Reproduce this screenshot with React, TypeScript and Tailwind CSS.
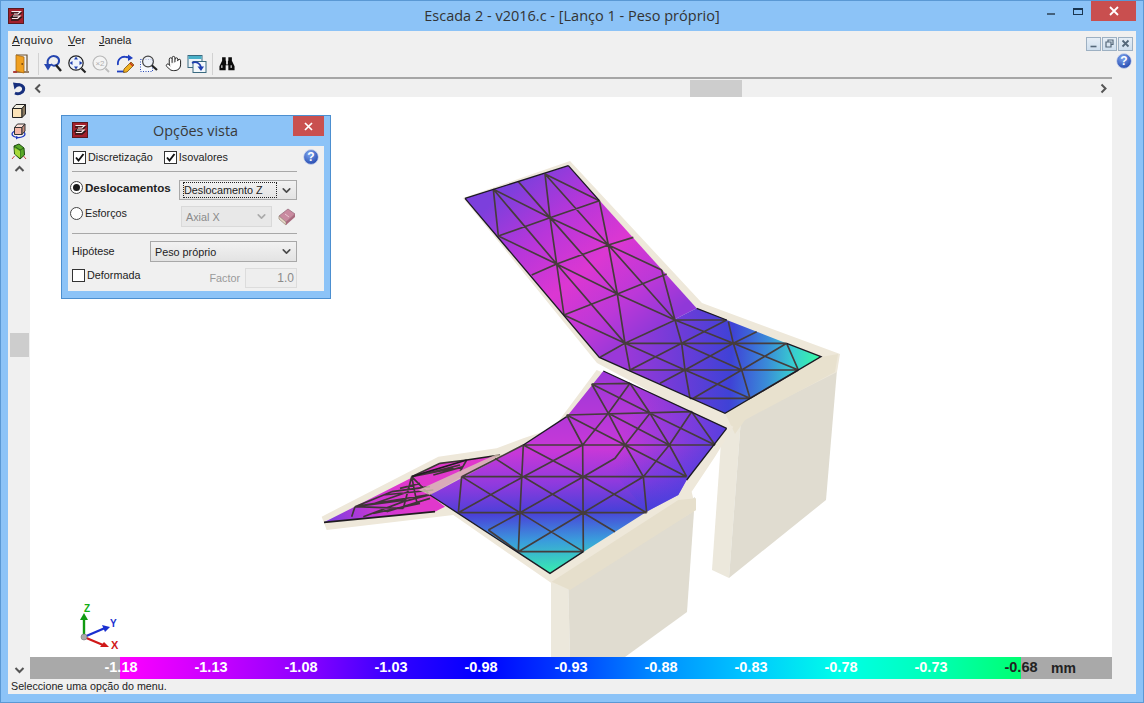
import { Hand, ChevronDown } from "lucide-react";

const sans = "font-['Liberation_Sans',Arial,sans-serif]";

function Logo() {
  return (
    <svg width="16" height="16" viewBox="0 0 16 16">
      <rect x="0" y="0" width="16" height="16" fill="#a3202c" />
      <rect x="0.5" y="0.5" width="15" height="15" fill="none" stroke="#5b1a20" />
      <path d="M3 5 H13 L10 7.5 H5 L3 9.5 H13 L10 12 H3" fill="none" stroke="#2a1a1a" strokeWidth="1.3" />
      <path d="M3.5 3.5 H12.5 L10 6 H6 M5 8 H12 L9.5 10.5 H4" fill="none" stroke="#f5eaea" strokeWidth="1.2" />
    </svg>
  );
}

function HelpIcon() {
  return (
    <svg width="16" height="16" viewBox="0 0 16 16">
      <defs>
        <radialGradient id="hg" cx="0.4" cy="0.3" r="0.8">
          <stop offset="0" stopColor="#7ea6ee" />
          <stop offset="1" stopColor="#1c3fa8" />
        </radialGradient>
      </defs>
      <circle cx="8" cy="8" r="7.4" fill="url(#hg)" stroke="#d5def0" strokeWidth="0.8" />
      <text x="8" y="12" textAnchor="middle" fontSize="12" fontWeight="700" fill="#fff" fontFamily="Liberation Sans">?</text>
    </svg>
  );
}

function Door() {
  return (
    <svg width="20" height="22" viewBox="0 0 20 22">
      <path d="M3 19 H18" stroke="#7a5a3a" strokeWidth="1.5" />
      <path d="M5 2 H16 V18" fill="none" stroke="#6b5030" strokeWidth="1.2" />
      <path d="M5 2 L13 4 V20 L5 18 Z" fill="#f0a020" stroke="#a86a10" strokeWidth="0.8" />
      <rect x="10.5" y="10" width="1.4" height="2" fill="#7a4a10" />
      <path d="M2 19 L6 19" stroke="#b03030" strokeWidth="1.6" />
    </svg>
  );
}

function ZoomReset() {
  return (
    <svg width="20" height="20" viewBox="0 0 20 20">
      <path d="M5 11 C3 4 9 1 13 2.5 C17 4 17 9 13.5 11 C11 12.2 9 11.5 8 10" fill="none" stroke="#2646b0" strokeWidth="2" />
      <path d="M1 10 H9 L5 16.5 Z" fill="#2646b0" />
      <path d="M13 11 L18 17" stroke="#222" strokeWidth="2.4" />
    </svg>
  );
}

function ZoomAll() {
  return (
    <svg width="20" height="20" viewBox="0 0 20 20">
      <circle cx="9" cy="9" r="7.2" fill="#eef3fb" stroke="#222" strokeWidth="1.2" />
      <path d="M9 2.5 L11 5.5 H7 Z M9 15.5 L11 12.5 H7 Z M2.5 9 L5.5 7 V11 Z M15.5 9 L12.5 7 V11 Z" fill="#1f3fb0" />
      <path d="M14.5 14.5 L18.5 18.5" stroke="#222" strokeWidth="2.2" />
    </svg>
  );
}

function ZoomTwo() {
  return (
    <svg width="20" height="20" viewBox="0 0 20 20">
      <circle cx="9" cy="9" r="7" fill="#f4f4f4" stroke="#b8b8b8" strokeWidth="1.2" />
      <text x="9" y="12" textAnchor="middle" fontSize="8" fill="#b0b0b0" fontFamily="Liberation Sans">×2</text>
      <path d="M14.5 14.5 L18 18" stroke="#bdbdbd" strokeWidth="1.8" />
    </svg>
  );
}

function Redraw() {
  return (
    <svg width="20" height="20" viewBox="0 0 20 20">
      <path d="M3 11 C2 5 7 2 11 3 L15 3.5" fill="none" stroke="#1f3fc0" strokeWidth="1.8" />
      <path d="M13 0.5 L18 4 L13 7 Z" fill="#1f3fc0" />
      <path d="M2 17.5 H10" stroke="#1f3fc0" strokeWidth="1.8" />
      <path d="M9 15 L16 8 L19 11 L12 18 L8.5 18.5 Z" fill="#f0b020" stroke="#7a5010" strokeWidth="0.8" />
      <path d="M15 9 L18 12" stroke="#c03020" strokeWidth="1.4" />
    </svg>
  );
}

function ZoomWin() {
  return (
    <svg width="20" height="20" viewBox="0 0 20 20">
      <rect x="1.5" y="5.5" width="12" height="12" fill="#f6f8fc" stroke="#2a4ab8" strokeDasharray="1 1.5" />
      <circle cx="9" cy="7.5" r="5.4" fill="#e9eef6" fillOpacity="0.7" stroke="#444" strokeWidth="1.2" />
      <path d="M13 11.5 L18 16" stroke="#222" strokeWidth="2.2" />
    </svg>
  );
}

function WinArrow() {
  return (
    <svg width="20" height="20" viewBox="0 0 20 20">
      <rect x="1" y="1.5" width="14" height="12" fill="#eaf3f8" stroke="#3a6a80" />
      <rect x="1.5" y="2" width="13" height="3" fill="#48b0c8" />
      <rect x="6" y="7.5" width="13" height="11" fill="#f2f8fb" stroke="#3a6a80" />
      <path d="M5 9 C9 7 13 9 14 13" fill="none" stroke="#1f3fb0" strokeWidth="1.8" />
      <path d="M10.5 12.5 H17 L14 17 Z" fill="#1f3fb0" />
    </svg>
  );
}

function Binoculars() {
  return (
    <svg width="16" height="15" viewBox="0 0 18 16">
      <path d="M3.5 1 H7.5 V5 H8 V9 H10 V5 H10.5 V1 H14.5 V5 L17.5 11 V15.5 H10.5 V10 H7.5 V15.5 H0.5 V11 L3.5 5 Z" fill="#0c0c0c" />
      <rect x="2.5" y="10" width="1.4" height="3" fill="#cfcfcf" />
      <rect x="13" y="10" width="1.4" height="3" fill="#cfcfcf" />
    </svg>
  );
}

function Undo() {
  return (
    <svg width="14" height="14" viewBox="0 0 14 14">
      <path d="M4.5 3.5 C8 1.5 12.5 4 11.5 8 C10.5 11.5 6 12.5 3 11" fill="none" stroke="#17307e" strokeWidth="3" />
      <path d="M1 0.5 L8 1.5 L2.5 7.5 Z" fill="#17307e" />
    </svg>
  );
}

function BoxA() {
  return (
    <svg width="16" height="16" viewBox="0 0 16 16">
      <path d="M1.5 5.5 H11 V14.5 H1.5 Z" fill="#fbe3b8" stroke="#222" />
      <path d="M1.5 5.5 L5 1.5 H14.5 L11 5.5 Z" fill="#f3efe0" stroke="#222" />
      <path d="M11 5.5 L14.5 1.5 V11 L11 14.5 Z" fill="#8a7a60" stroke="#222" />
    </svg>
  );
}

function BoxB() {
  return (
    <svg width="16" height="18" viewBox="0 0 16 18">
      <ellipse cx="7.5" cy="12" rx="6.5" ry="3.6" fill="none" stroke="#2038c0" strokeWidth="1.3" />
      <path d="M3.5 5.5 H11 V12.5 H3.5 Z" fill="#f4b8a8" stroke="#333" />
      <path d="M3.5 5.5 L6.5 2 H14 L11 5.5 Z" fill="#fbe0d8" stroke="#333" />
      <path d="M11 5.5 L14 2 V9 L11 12.5 Z" fill="#c89080" stroke="#333" />
      <path d="M5 14 L8 15.5 L5 17.5 Z" fill="#2038c0" />
    </svg>
  );
}

function BoxC() {
  return (
    <svg width="16" height="18" viewBox="0 0 16 18">
      <path d="M3 3 L8 1 L13 5 L13.5 12 L9 16 L3.5 11 Z" fill="#58a828" stroke="#1e4a10" />
      <path d="M3 3 L9 7 L9 16 M9 7 L13 5" fill="none" stroke="#205010" strokeWidth="0.8" />
      <path d="M3.5 5 L9 8 V15 L4 11 Z" fill="#a8d838" />
      <path d="M1 16 L3.5 13 M15 16 L12.5 13" stroke="#c84040" />
    </svg>
  );
}

function Chev({ dir }: { dir: "up" | "down" | "left" | "right" }) {
  const d = {
    up: "M1.5 7 L5.5 3 L9.5 7",
    down: "M1.5 3 L5.5 7 L9.5 3",
    left: "M7 1.5 L3 5.5 L7 9.5",
    right: "M3.5 1.5 L7.5 5.5 L3.5 9.5",
  }[dir];
  return (
    <svg width="11" height="11" viewBox="0 0 11 11">
      <path d={d} fill="none" stroke="#555" strokeWidth="2" />
    </svg>
  );
}

function Book() {
  return (
    <svg width="18" height="18" viewBox="0 0 18 18">
      <path d="M1 8 L10 1 L17 6 L8 14 Z" fill="#c98aa0" stroke="#9a7080" strokeWidth="0.8" />
      <path d="M1 8 L8 14 V17 L1 11 Z" fill="#e8d8c8" stroke="#a09080" strokeWidth="0.8" />
      <path d="M8 14 L17 6 V9 L8 17 Z" fill="#a8687c" />
      <path d="M7 6 L11 9" stroke="#e8c8d0" />
    </svg>
  );
}

function Check({ on }: { on: boolean }) {
  return (
    <span className="w-[13px] h-[13px] bg-white border border-[#333] flex items-center justify-center shrink-0">
      {on && (
        <svg width="11" height="11" viewBox="0 0 11 11">
          <path d="M2 5.5 L4.5 8.5 L9.5 2" fill="none" stroke="#111" strokeWidth="1.9" />
        </svg>
      )}
    </span>
  );
}

function Radio({ on }: { on: boolean }) {
  return (
    <span className="w-[13px] h-[13px] rounded-full bg-white border border-[#444] flex items-center justify-center shrink-0">
      {on && <span className="w-[7px] h-[7px] rounded-full bg-[#1a1a1a]" />}
    </span>
  );
}

function Select({
  text,
  w,
  h,
  disabled,
  focus,
}: {
  text: string;
  w: string;
  h: string;
  disabled?: boolean;
  focus?: boolean;
}) {
  return (
    <div
      className={`${w} ${h} flex items-center justify-between pl-[3px] pr-[3px] border shrink-0 ${
        disabled ? "bg-[#e8e8e8] border-[#d9d9d9] text-[#8a8a8a]" : "bg-[linear-gradient(#f2f2f2,#e3e3e3)] border-[#a8a8a8] text-[#222]"
      }`}
    >
      <span className={`${focus ? "border border-dotted border-[#222]" : "border border-transparent"} pr-[13px] leading-[14px] -mr-[6px]`}>{text}</span>
      <ChevronDown size={13} strokeWidth={3} className={`ml-auto ${disabled ? "text-[#aaa]" : "text-[#4a4a4a]"}`} />
    </div>
  );
}

function Dialog() {
  return (
    <div className={`absolute left-[31px] top-[18px] w-[270px] h-[184px] bg-[#8cc3f7] border border-[#4c8fd0] flex flex-col ${sans} text-[10.8px] text-[#222]`}>
      <div className="h-[30px] flex items-start pl-[10px] pr-[6px] shrink-0">
        <div className="pt-[6px]">
          <Logo />
        </div>
        <div className="flex-1 text-center pt-[5px] text-[14.4px] leading-[20px] text-[#3a3a3a] font-['Open_Sans',sans-serif] pl-[10px]">Opções vista</div>
        <div className="w-[31px] h-[20px] bg-[#c9504f] flex items-center justify-center">
          <svg width="9" height="9" viewBox="0 0 9 9">
            <path d="M1 1 L8 8 M8 1 L1 8" stroke="#fff" strokeWidth="1.7" />
          </svg>
        </div>
      </div>
      <div className="mx-[6px] h-[145px] bg-[#f0f0f0] flex flex-col pl-[4px] pr-[1px]">
        <div className="h-[26px] flex items-center relative border-b border-[#a8a8a8] mr-[26px] shrink-0 pb-[2px]">
          <div className="flex items-center gap-[2px] pl-[1px]">
            <Check on />
            <span>Discretização</span>
          </div>
          <div className="flex items-center gap-[2px] ml-[11px]">
            <Check on />
            <span>Isovalores</span>
          </div>
          <div className="absolute left-[231px] top-[3px]">
            <HelpIcon />
          </div>
        </div>
        <div className="h-[62px] border-b border-[#a8a8a8] mr-[26px] shrink-0 flex flex-col">
          <div className="flex items-center pt-[8px] -ml-[2px]">
            <div className="flex items-center -mt-[5px]">
              <Radio on />
              <span className="ml-[2px] font-bold text-[11.6px] w-[94px]">Deslocamentos</span>
            </div>
            <Select text="Deslocamento Z" w="w-[118px]" h="h-[20px]" focus />
          </div>
          <div className="flex items-center mt-[3px] -ml-[2px]">
            <div className="flex items-center -mt-[4px]">
              <Radio on={false} />
              <span className="ml-[2px] w-[96px]">Esforços</span>
            </div>
            <div className="mt-[3px] flex items-center shrink-0">
              <Select text="Axial X" w="w-[91px]" h="h-[21px]" disabled />
              <div className="ml-[6px]">
                <Book />
              </div>
            </div>
          </div>
        </div>
        <div className="flex items-center h-[35px] mr-[24px] shrink-0">
          <span className="w-[78px]">Hipótese</span>
          <Select text="Peso próprio" w="w-[147px]" h="h-[21px]" />
        </div>
        <div className="flex items-start h-[21px] mr-[26px] shrink-0">
          <Check on={false} />
          <span className="ml-[2px] leading-[13px]">Deformada</span>
          <span className="ml-auto mr-[5px] mt-[2px] leading-[14px] text-[#9a9a9a]">Factor</span>
          <div className="w-[52px] h-[20px] -mt-[1px] border border-[#dcdcdc] bg-[#eeeeee] text-[#8a8a8a] text-right pr-[2px] text-[12px] leading-[19px]">1.0</div>
        </div>
      </div>
    </div>
  );
}

const upperMesh =
  "M160 118 L175 258 M160 118 L330 203 M160 118 L350 342 M235 95 L330 203 M315 72 L330 203 M315 72 L478 152 M315 72 L505 285 M330 203 L478 152 M175 258 L330 203 M175 258 L350 342 M330 203 L350 342 M330 203 L505 285 M330 203 L532 432 M478 152 L505 285 M350 342 L505 285 M275 375 L350 342 M505 285 L580 262 M505 285 L532 432 M505 285 L665 360 M505 285 L705 510 M350 342 L372 495 M350 342 L532 432 M350 342 L555 580 M372 495 L532 432 M532 432 L680 372 M532 432 L555 580 M532 432 L705 510 M665 360 L705 510 M372 495 L555 580 M555 580 L705 510 M480 622 L555 580 M555 580 L570 660 M555 580 L735 660 M555 580 L1040 580 M705 510 L860 510 M705 510 L725 580 M705 510 L880 580 M725 580 L570 660 M725 580 L735 660 M725 580 L905 660 M725 580 L860 510 M880 580 L865 515 M880 580 L735 660 M880 580 L905 660 M880 580 L950 545 M880 580 L1075 660 M1040 580 L905 660 M1040 580 L1075 660 M570 660 L1075 660 M735 660 L750 745 M735 660 L660 700 M735 660 L930 745 M905 660 L930 745 M905 660 L760 745 M750 745 L930 745 M1075 660 L930 745";

const middleMesh =
  "M455 350 L1130 350 M445 458 L1010 458 M625 575 L820 575 M640 255 L1215 255 M770 165 L1145 155 M640 255 L630 458 L625 575 M818 255 L820 575 M1000 350 L1010 458 M455 350 L445 458 M640 255 L820 350 L1010 458 M640 350 L820 458 L915 515 M640 350 L445 458 M820 350 L630 458 M820 458 L625 575 M630 458 L820 575 M625 575 L535 510 M630 458 L535 510 M1000 350 L820 458 M818 255 L640 350 M820 350 L915 295 L945 255 M770 165 L818 255 M770 165 L945 255 M845 72 L895 160 M845 72 L1020 160 M895 160 L945 255 M895 160 L818 255 M960 70 L895 160 M960 70 L1020 160 M1020 160 L1078 255 M1020 160 L945 255 M895 160 L1078 255 M1145 155 L1078 255 M1020 160 L1215 255 M1145 155 L1215 255 M945 255 L1000 350 M945 255 L1130 350 M1078 255 L1130 350 M1078 255 L1000 350 M555 295 L640 350 M640 255 L455 350 M845 72 L960 70 M455 350 L630 458";

const leftMesh =
  "M105 185 L95 215 M105 185 L250 190 M105 185 L260 165 M105 185 L215 140 M215 140 L330 125 M275 95 L250 190 M275 95 L325 145 M360 55 L440 45 M360 55 L275 95 M130 215 L250 170 L345 145 M200 200 L330 160 M440 45 L420 80 M215 140 L290 130 M160 205 L300 175 M240 130 L300 115 M105 185 L320 150 M150 180 L265 140 M275 95 L400 70 M300 90 L420 60 M275 95 L290 170 M340 90 L430 65 M190 150 L340 135";

function Scene() {
  return (
    <svg className="absolute inset-0" width="1082" height="560" viewBox="30 97 1082 560">
      <defs>
        <linearGradient id="fu" gradientUnits="userSpaceOnUse" x1="230" y1="95" x2="620" y2="560">
          <stop offset="0" stopColor="#7c3fdc" />
          <stop offset="0.28" stopColor="#b736da" />
          <stop offset="0.55" stopColor="#dc37d2" />
          <stop offset="0.8" stopColor="#bb38d8" />
          <stop offset="1" stopColor="#9038d8" />
        </linearGradient>
        <linearGradient id="lu" gradientUnits="userSpaceOnUse" x1="560" y1="620" x2="1130" y2="650">
          <stop offset="0" stopColor="#9a38d8" />
          <stop offset="0.3" stopColor="#6a3cd8" />
          <stop offset="0.55" stopColor="#3f42d6" />
          <stop offset="0.74" stopColor="#3a8cd8" />
          <stop offset="0.88" stopColor="#38cfd0" />
          <stop offset="1" stopColor="#38f5a8" />
        </linearGradient>
        <linearGradient id="md" gradientUnits="userSpaceOnUse" x1="700" y1="30" x2="720" y2="640">
          <stop offset="0" stopColor="#9a38d8" />
          <stop offset="0.4" stopColor="#c838d8" />
          <stop offset="0.56" stopColor="#8e3ade" />
          <stop offset="0.7" stopColor="#4a40d8" />
          <stop offset="0.84" stopColor="#3a9cdc" />
          <stop offset="1" stopColor="#38eeb0" />
        </linearGradient>
        <linearGradient id="mo" gradientUnits="userSpaceOnUse" x1="950" y1="170" x2="1250" y2="250">
          <stop offset="0" stopColor="#4a40e0" stopOpacity="0" />
          <stop offset="1" stopColor="#3f40e0" stopOpacity="0.85" />
        </linearGradient>
        <linearGradient id="lf" gradientUnits="userSpaceOnUse" x1="20" y1="230" x2="260" y2="130">
          <stop offset="0" stopColor="#7a3de0" />
          <stop offset="0.6" stopColor="#cc37d4" />
          <stop offset="1" stopColor="#e038cc" />
        </linearGradient>
      </defs>

      <path d="M722 428 L741 418 L729 578 L712 570 Z" fill="#ece8dc" />
      <path d="M741 418 L838 358 L826 500 L729 578 Z" fill="#e0dcd0" />
      <path d="M551 583 L568 577 L570 657 L551 657 Z" fill="#ece8dc" />
      <path d="M568 577 L695 497 L687 612 L625 657 L570 657 Z" fill="#e0dcd0" />

      <path d="M463 198 L570 161 L702 303 L840 354 L837 372 L745 418 L722 430 L597 363 Z" fill="#eee8da" />
      <path d="M725 413 L821 357 L838 354 L835 372 L745 420 L735 434 Z" fill="#e8e1ce" />

      <g transform="translate(310 360) scale(0.33333)">
        <path d="M35 470 L385 290 L560 265 L640 235 L730 205 L860 30 L1250 190 L1270 200 L1215 290 L1145 395 L1158 450 L775 680 L725 670 L430 465 L50 510 Z" fill="#eee8da" />
        <path d="M725 665 L1105 420 L1158 415 L1158 450 L780 690 Z" fill="#e6dfcc" />
      </g>

      <g transform="translate(440 150) scale(0.33333)">
        <path d="M75 145 L385 47 L770 475 L478 622 Z" fill="url(#fu)" />
        <path d="M478 622 L770 475 L1143 620 L855 790 Z" fill="url(#lu)" />
        <path d={upperMesh} fill="none" stroke="#463c3c" strokeWidth="5" />
        <path d="M75 145 L385 47 M385 47 L478 152 M75 145 L478 622 L855 790 L1143 620 L1040 580 M770 475 L860 510" fill="none" stroke="#1c1a24" strokeWidth="4" />
      </g>

      <g transform="translate(320 445) scale(0.33333)">
        <path d="M12 232 L360 55 L440 45 L540 30 L330 150 L375 185 L345 200 Z" fill="url(#lf)" />
        <path d={leftMesh} fill="none" stroke="#3f3636" strokeWidth="5" />
        <path d="M12 232 L345 200 M275 95 L440 45 L540 30" fill="none" stroke="#201c20" strokeWidth="5" />
        <path d="M295 135 L530 28 L565 32 L335 152 Z" fill="#d8c8b4" fillOpacity="0.8" />
      </g>

      <g transform="translate(310 360) scale(0.33333)">
        <path d="M360 405 L640 255 L770 170 L880 33 L1250 205 L1130 360 L1105 405 L1010 455 L720 640 Z" fill="url(#md)" />
        <path d="M770 170 L880 33 L1250 205 L1130 360 L1105 405 L1010 455 Z" fill="url(#mo)" />
        <path d={middleMesh} fill="none" stroke="#453c3c" strokeWidth="5" />
        <path d="M360 405 L720 640 L820 575 M880 33 L1250 205 M1250 205 L1130 360 M640 255 L770 170" fill="none" stroke="#1c1a24" strokeWidth="4" />
      </g>

      <path d="M84 637 V618" stroke="#109a10" strokeWidth="2.4" />
      <path d="M80 620 L84 613 L88 620 Z" fill="#109a10" />
      <path d="M84 637 L105 628" stroke="#1a30d0" strokeWidth="2.4" />
      <path d="M102 625 L110 627 L105 632 Z" fill="#1a30d0" />
      <path d="M84 637 L103 645" stroke="#d01818" strokeWidth="2.4" />
      <path d="M100 647 L109 647 L104 642 Z" fill="#d01818" />
      <circle cx="84" cy="637" r="3" fill="#a9a9a9" stroke="#777" strokeWidth="0.6" />
      <text x="84" y="612" fontSize="10" fontWeight="700" fill="#14b014" fontFamily="Liberation Sans">Z</text>
      <text x="110" y="627" fontSize="10" fontWeight="700" fill="#1a30d0" fontFamily="Liberation Sans">Y</text>
      <text x="111" y="649" fontSize="11" fontWeight="700" fill="#d01818" fontFamily="Liberation Sans">X</text>
    </svg>
  );
}

const labels = ["-1.18", "-1.13", "-1.08", "-1.03", "-0.98", "-0.93", "-0.88", "-0.83", "-0.78", "-0.73", "-0.68"];

function ColorBar() {
  return (
    <div className={`relative h-[22px] flex shrink-0 ${sans}`}>
      <div className="w-[90px] bg-[#a9a9a9]" />
      <div className="w-[901px] bg-[linear-gradient(90deg,#ff00ff_0%,#c000ff_12%,#9000ff_20%,#3000ff_31%,#0000ff_40%,#0040ff_50%,#0090ff_60%,#00c8ff_70%,#00ffe8_80%,#00ffb8_90%,#00ff70_100%)]" />
      <div className="flex-1 bg-[#a9a9a9]" />
      <div className="absolute inset-0 pl-[46px] flex items-center text-[14.5px] font-bold text-white">
        {labels.map((l, i) => (
          <span key={l} className={`w-[90px] text-center ${i === 10 ? "text-[#222]" : ""}`}>
            {l}
          </span>
        ))}
        <span className="ml-[-15px] text-[#222] font-bold text-[14px]">mm</span>
      </div>
    </div>
  );
}

export default function App() {
  return (
    <div className={`w-[1144px] h-[703px] overflow-hidden bg-[#8cc3f7] border border-[#5a98d4] flex flex-col ${sans}`}>
      <div className="h-[30px] flex shrink-0">
        <div className="w-[96px] pl-[7px] pt-[7px]">
          <Logo />
        </div>
        <div className="flex-1 text-center pt-[5px] text-[14.5px] leading-[20px] text-[#333] font-['Open_Sans',sans-serif]">Escada 2 - v2016.c - [Lanço 1 - Peso próprio]</div>
        <div className="w-[96px] flex items-start">
          <div className="w-[8px] h-[2px] mt-[12px] bg-[#44617c]" />
          <div className="w-[10px] h-[7px] mt-[7px] ml-[18px] border-[1.5px] border-t-2 border-[#1a3550]" />
          <div className="w-[45px] h-[20px] ml-[8px] bg-[#c94f4f] flex items-center justify-center">
            <svg width="10" height="10" viewBox="0 0 10 10">
              <path d="M1 1 L9 9 M9 1 L1 9" stroke="#fff" strokeWidth="1.8" />
            </svg>
          </div>
        </div>
      </div>

      <div className="mx-[7px] flex-1 mb-[8px] bg-[#f0f0f0] flex flex-col text-[#222] text-[10.7px]">
        <div className="h-[19px] flex items-center shrink-0 text-[11.5px] pl-[4px]">
          <span className="w-[56px] tracking-[0.3px]">
            <u>A</u>rquivo
          </span>
          <span className="w-[31px]">
            <u>V</u>er
          </span>
          <span className="text-[11px]">
            <u>J</u>anela
          </span>
          <div className="ml-auto mr-[3px] mt-[6px] flex gap-[1px]">
            {["min", "res", "cls"].map((k) => (
              <div key={k} className="w-[15px] h-[14px] border border-[#9db0c2] bg-[linear-gradient(#e6eef6,#cfdfee)] flex items-center justify-center">
                <svg width="9" height="9" viewBox="0 0 9 9">
                  {k === "min" && <path d="M1.5 7.5 H7.5" stroke="#55687a" strokeWidth="1.6" />}
                  {k === "res" && <path d="M3 2.5 V1 H8 V5.5 H6.5 M1 3 H6 V8 H1 Z" fill="none" stroke="#55687a" strokeWidth="1.2" />}
                  {k === "cls" && <path d="M1.5 1.5 L7.5 7.5 M7.5 1.5 L1.5 7.5" stroke="#55687a" strokeWidth="1.8" />}
                </svg>
              </div>
            ))}
          </div>
        </div>

        <div className="h-[27px] flex items-center shrink-0 pl-[3px]">
          <Door />
          <div className="w-[1px] h-[22px] bg-[#d2d2d2] ml-[7px] mr-[4px]" />
          <div className="flex items-center gap-[4px]">
            <ZoomReset />
            <ZoomAll />
            <ZoomTwo />
            <Redraw />
            <ZoomWin />
            <div className="w-[20px] flex justify-center">
              <Hand size={17} strokeWidth={1.4} color="#222" fill="#fff" />
            </div>
            <WinArrow />
          </div>
          <div className="w-[1px] h-[22px] bg-[#d2d2d2] ml-[5px] mr-[6px]" />
          <Binoculars />
          <div className="ml-auto mr-[4px] mt-[-5px]">
            <HelpIcon />
          </div>
        </div>

        <div className="h-[3px] shrink-0 mr-[24px] border-t-2 border-[#a6a6a6]" />

        <div className="h-[599px] flex shrink-0">
          <div className="w-[22px] flex flex-col items-center shrink-0 pb-[3px]">
            <div className="mt-[2px]">
              <Undo />
            </div>
            <div className="mt-[7px]">
              <BoxA />
            </div>
            <div className="mt-[3px]">
              <BoxB />
            </div>
            <div className="mt-[3px]">
              <BoxC />
            </div>
            <div className="mt-[3px]">
              <Chev dir="up" />
            </div>
            <div className="w-[19px] h-[24px] bg-[#cdcdcd] mt-[158px] ml-[1px]" />
            <div className="mt-auto">
              <Chev dir="down" />
            </div>
          </div>

          <div className="w-[1082px] flex flex-col shrink-0">
            <div className="h-[17px] flex items-center justify-between shrink-0 relative px-[3px]">
              <Chev dir="left" />
              <div className="absolute left-[660px] top-0 w-[52px] h-[17px] bg-[#cdcdcd]" />
              <Chev dir="right" />
            </div>
            <div className="relative flex-1 bg-white overflow-hidden">
              <Scene />
              <Dialog />
            </div>
            <ColorBar />
          </div>
          <div className="flex-1" />
        </div>

        <div className="h-[15px] shrink-0 flex items-center pl-[3px] text-[#222]">Seleccione uma opção do menu.</div>
      </div>
    </div>
  );
}
